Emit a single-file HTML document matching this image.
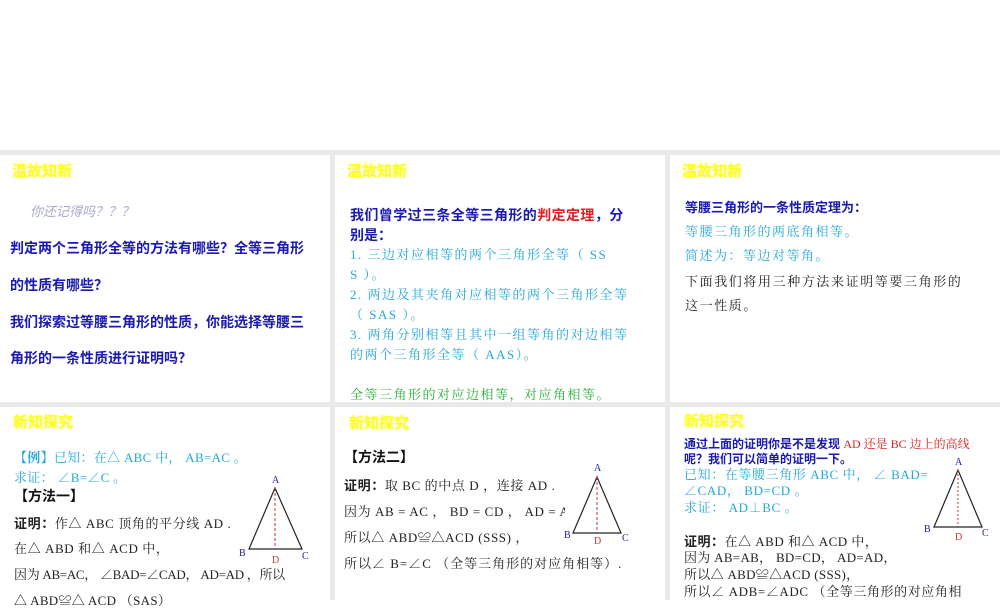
<!DOCTYPE html>
<html><head><meta charset="utf-8"><style>
body{margin:0;width:1000px;height:600px;overflow:hidden;background:#fff;position:relative;font-family:"Liberation Sans","Noto Sans CJK SC",sans-serif}
.bg{position:absolute;left:0;top:150px;width:1000px;height:450px;background:#e9e9e9}
.p{position:absolute;background:#fff;overflow:hidden}
.t{position:absolute;white-space:nowrap;line-height:1}
.h{font-size:15px;color:#ffff20;font-weight:bold;text-shadow:0 0 2px #f8f880}
.b{color:#1a1ab0;font-weight:bold;font-family:"Liberation Sans","Noto Sans CJK SC",sans-serif}
.c{color:#25a8d8;font-family:"Liberation Serif","Noto Serif CJK SC",serif}
.k{color:#222;font-family:"Liberation Serif","Noto Serif CJK SC",serif}
.g{color:#22b030;font-family:"Liberation Serif","Noto Serif CJK SC",serif}
.r{color:#e02020}
</style></head><body>
<div class="bg"></div>
<div class="p" style="left:0;top:155px;width:330px;height:247px"></div>
<div class="p" style="left:335px;top:155px;width:330px;height:247px"></div>
<div class="p" style="left:670px;top:155px;width:330px;height:247px"></div>
<div class="p" style="left:0;top:407px;width:330px;height:193px"></div>
<div class="p" style="left:335px;top:407px;width:330px;height:193px"></div>
<div class="p" style="left:670px;top:407px;width:330px;height:193px"></div>

<!-- panel 1 -->
<div class="t h" style="left:12px;top:164px">温故知新</div>
<div class="t" style="left:30px;top:205px;font-size:13px;font-style:italic;color:#a8a8cc">你还记得吗？？？</div>
<div class="t b" style="left:10px;top:241px;font-size:14px">判定两个三角形全等的方法有哪些？全等三角形</div>
<div class="t b" style="left:10px;top:278px;font-size:14px">的性质有哪些？</div>
<div class="t b" style="left:10px;top:315px;font-size:14px">我们探索过等腰三角形的性质，你能选择等腰三</div>
<div class="t b" style="left:10px;top:351px;font-size:14px">角形的一条性质进行证明吗？</div>

<!-- panel 2 -->
<div class="t h" style="left:347px;top:164px">温故知新</div>
<div class="t b" style="left:350px;top:208px;font-size:14px;letter-spacing:0.4px">我们曾学过三条全等三角形的<span class="r">判定定理</span>，分</div>
<div class="t b" style="left:350px;top:228px;font-size:14px">别是：</div>
<div class="t c" style="left:350px;top:248px;font-size:13px;letter-spacing:1.5px">1. 三边对应相等的两个三角形全等（ SS</div>
<div class="t c" style="left:350px;top:268px;font-size:13px;letter-spacing:1.5px">S ）。</div>
<div class="t c" style="left:350px;top:288px;font-size:13px;letter-spacing:1.5px">2. 两边及其夹角对应相等的两个三角形全等</div>
<div class="t c" style="left:350px;top:308px;font-size:13px;letter-spacing:1.5px">（ SAS ）。</div>
<div class="t c" style="left:350px;top:328px;font-size:13px;letter-spacing:1.5px">3. 两角分别相等且其中一组等角的对边相等</div>
<div class="t c" style="left:350px;top:348px;font-size:13px;letter-spacing:1.5px">的两个三角形全等（ AAS）。</div>
<div class="t g" style="left:350px;top:388px;font-size:13px;letter-spacing:1.5px">全等三角形的对应边相等，对应角相等。</div>

<!-- panel 3 -->
<div class="t h" style="left:682px;top:164px">温故知新</div>
<div class="t b" style="left:685px;top:201px;font-size:13px">等腰三角形的一条性质定理为：</div>
<div class="t c" style="left:685px;top:225px;font-size:13px;letter-spacing:1.5px">等腰三角形的两底角相等。</div>
<div class="t c" style="left:685px;top:249px;font-size:13px;letter-spacing:1.5px">简述为：等边对等角。</div>
<div class="t k" style="left:685px;top:275px;font-size:13px;letter-spacing:1.6px">下面我们将用三种方法来证明等要三角形的</div>
<div class="t k" style="left:685px;top:299px;font-size:13px;letter-spacing:1.6px">这一性质。</div>

<!-- panel 4 -->
<div class="t h" style="left:13px;top:415px">新知探究</div>
<div class="t c" style="left:14px;top:451px;font-size:13px;letter-spacing:0.3px"><b>【例】</b>已知：在△ ABC 中， AB=AC 。</div>
<div class="t c" style="left:14px;top:471px;font-size:13px;letter-spacing:0.3px">求证： ∠B=∠C 。</div>
<div class="t" style="left:14px;top:489px;font-size:14px;font-weight:bold;color:#111">【方法一】</div>
<div class="t k" style="left:14px;top:516px;font-size:13px;letter-spacing:0.6px"><b style="font-family:'Noto Sans CJK SC',sans-serif">证明：</b>作△ ABC 顶角的平分线 AD .</div>
<div class="t k" style="left:14px;top:542px;font-size:13px;letter-spacing:0.6px">在△ ABD 和△ ACD 中，</div>
<div class="t k" style="left:14px;top:568px;font-size:13px;letter-spacing:-0.3px">因为 AB=AC， ∠BAD=∠CAD， AD=AD ，所以</div>
<div class="t k" style="left:14px;top:594px;font-size:13px;letter-spacing:0.3px">△ ABD≌△ ACD （SAS）</div>
<svg style="position:absolute;left:235px;top:470px" width="80" height="100">
<polygon points="40,18 14,79 67,79" fill="none" stroke="#222" stroke-width="1.2"/>
<line x1="40" y1="18" x2="40" y2="79" stroke="#d03030" stroke-dasharray="3,2"/>
<text x="37" y="13" font-size="10" fill="#2020a0" font-family="Liberation Serif">A</text>
<text x="4" y="86" font-size="10" fill="#2020a0" font-family="Liberation Serif">B</text>
<text x="67" y="89" font-size="10" fill="#2020a0" font-family="Liberation Serif">C</text>
<text x="37" y="93" font-size="10" fill="#d03030" font-family="Liberation Serif">D</text>
</svg>

<!-- panel 5 -->
<div class="t h" style="left:349px;top:416px">新知探究</div>
<div class="t" style="left:344px;top:450px;font-size:14px;font-weight:bold;color:#111">【方法二】</div>
<div class="t k" style="left:344px;top:478px;font-size:13px;letter-spacing:0.6px"><b style="font-family:'Noto Sans CJK SC',sans-serif">证明：</b>取 BC 的中点 D ，连接 AD .</div>
<div class="t k" style="left:344px;top:505px;font-size:13px;letter-spacing:0.6px">因为 AB = AC ， BD = CD ， AD = A</div>
<div class="t k" style="left:344px;top:531px;font-size:13px;letter-spacing:0.6px">所以△ ABD≌△ACD (SSS) ，</div>
<div class="t k" style="left:344px;top:557px;font-size:13px;letter-spacing:1px">所以∠ B=∠C （全等三角形的对应角相等）.</div>
<div style="position:absolute;left:565px;top:502px;width:10px;height:16px;background:#fff"></div>
<svg style="position:absolute;left:560px;top:460px" width="80" height="90">
<polygon points="37,17 13,73 61,73" fill="none" stroke="#222" stroke-width="1.2"/>
<line x1="37" y1="17" x2="37" y2="73" stroke="#d03030" stroke-dasharray="3,2"/>
<text x="34" y="11" font-size="10" fill="#2020a0" font-family="Liberation Serif">A</text>
<text x="4" y="78" font-size="10" fill="#2020a0" font-family="Liberation Serif">B</text>
<text x="62" y="81" font-size="10" fill="#2020a0" font-family="Liberation Serif">C</text>
<text x="34" y="84" font-size="10" fill="#d03030" font-family="Liberation Serif">D</text>
</svg>

<!-- panel 6 -->
<div class="t h" style="left:684px;top:414px">新知探究</div>
<div class="t b" style="left:684px;top:438px;font-size:12px">通过上面的证明你是不是发现 <span class="r" style="font-weight:normal;font-family:'Liberation Serif','Noto Serif CJK SC',serif">AD 还是 BC 边上的高线</span></div>
<div class="t b" style="left:684px;top:453px;font-size:12px">呢？我们可以简单的证明一下。</div>
<div class="t c" style="left:684px;top:468px;font-size:13px;letter-spacing:0.6px">已知：在等腰三角形 ABC 中， ∠ BAD=</div>
<div class="t c" style="left:684px;top:484px;font-size:13px;letter-spacing:0.6px">∠CAD， BD=CD 。</div>
<div class="t c" style="left:684px;top:501px;font-size:13px;letter-spacing:0.6px">求证： AD⊥BC 。</div>
<div class="t k" style="left:684px;top:534px;font-size:13px;letter-spacing:0.5px"><b style="font-family:'Noto Sans CJK SC',sans-serif;font-size:13px">证明：</b>在△ ABD 和△ ACD 中，</div>
<div class="t k" style="left:684px;top:551px;font-size:13px;letter-spacing:0.3px">因为 AB=AB， BD=CD， AD=AD，</div>
<div class="t k" style="left:684px;top:568px;font-size:13px;letter-spacing:0.3px">所以△ ABD≌△ACD (SSS)，</div>
<div class="t k" style="left:684px;top:585px;font-size:13px;letter-spacing:0.6px">所以∠ ADB=∠ADC （全等三角形的对应角相</div>
<svg style="position:absolute;left:920px;top:455px" width="80" height="90">
<polygon points="38,15 14,72 62,72" fill="none" stroke="#222" stroke-width="1.2"/>
<line x1="38" y1="15" x2="38" y2="72" stroke="#d03030" stroke-dasharray="2,2"/>
<text x="35" y="10" font-size="10" fill="#2020a0" font-family="Liberation Serif">A</text>
<text x="4" y="77" font-size="10" fill="#2020a0" font-family="Liberation Serif">B</text>
<text x="62" y="81" font-size="10" fill="#2020a0" font-family="Liberation Serif">C</text>
<text x="35" y="85" font-size="10" fill="#d03030" font-family="Liberation Serif">D</text>
</svg>
</body></html>
